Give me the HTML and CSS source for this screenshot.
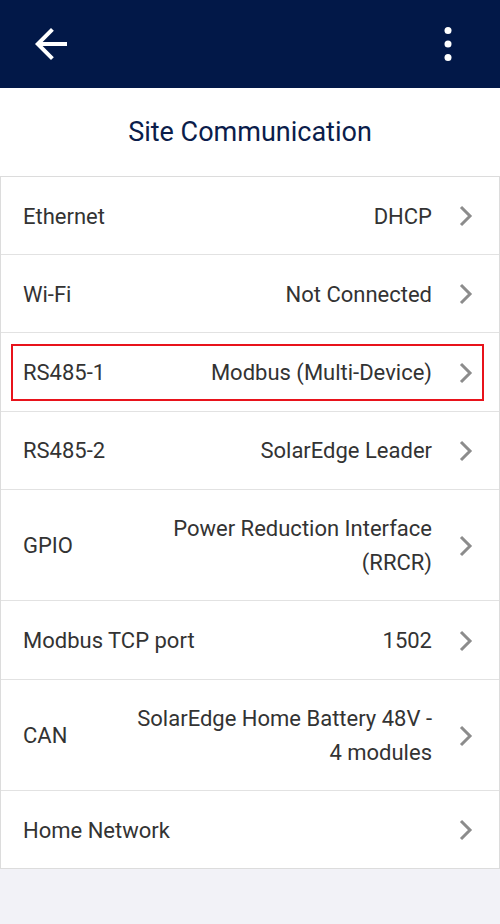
FILE: index.html
```html
<!DOCTYPE html>
<html>
<head>
<meta charset="utf-8">
<link rel="stylesheet" href="styles.css">
</head>
<body>
<header class="appbar">
  <svg class="back" viewBox="0 0 24 24" width="48" height="48"><path d="M20 11H7.83l5.59-5.59L12 4l-8 8 8 8 1.41-1.41L7.83 13H20v-2z" fill="#fff"/></svg>
  <svg class="kebab" viewBox="0 0 10 40" width="10" height="40"><circle cx="5" cy="6.5" r="3.5" fill="#fff"/><circle cx="5" cy="20" r="3.5" fill="#fff"/><circle cx="5" cy="33.5" r="3.5" fill="#fff"/></svg>
</header>
<div class="titlebar"><h1 class="title">Site Communication</h1></div>
<ul class="list">
  <li class="row"><span class="label">Ethernet</span><span class="value">DHCP</span><svg class="chev" viewBox="0 0 14 22" width="14" height="22"><polyline points="2,2 11,11 2,20" /></svg></li>
  <li class="row"><span class="label">Wi-Fi</span><span class="value">Not Connected</span><svg class="chev" viewBox="0 0 14 22" width="14" height="22"><polyline points="2,2 11,11 2,20" /></svg></li>
  <li class="row highlighted"><span class="label">RS485-1</span><span class="value">Modbus (Multi-Device)</span><svg class="chev" viewBox="0 0 14 22" width="14" height="22"><polyline points="2,2 11,11 2,20" /></svg></li>
  <li class="row"><span class="label">RS485-2</span><span class="value">SolarEdge Leader</span><svg class="chev" viewBox="0 0 14 22" width="14" height="22"><polyline points="2,2 11,11 2,20" /></svg></li>
  <li class="row"><span class="label">GPIO</span><span class="value">Power Reduction Interface<br>(RRCR)</span><svg class="chev" viewBox="0 0 14 22" width="14" height="22"><polyline points="2,2 11,11 2,20" /></svg></li>
  <li class="row"><span class="label">Modbus TCP port</span><span class="value">1502</span><svg class="chev" viewBox="0 0 14 22" width="14" height="22"><polyline points="2,2 11,11 2,20" /></svg></li>
  <li class="row"><span class="label">CAN</span><span class="value">SolarEdge Home Battery 48V -<br>4 modules</span><svg class="chev" viewBox="0 0 14 22" width="14" height="22"><polyline points="2,2 11,11 2,20" /></svg></li>
  <li class="row"><span class="label">Home Network</span><span class="value"></span><svg class="chev" viewBox="0 0 14 22" width="14" height="22"><polyline points="2,2 11,11 2,20" /></svg></li>
</ul>
</body>
</html>
```
FILE: styles.css
```css
* { box-sizing: border-box; }
html, body {
  margin: 0;
  padding: 0;
  background: #f2f2f7;
  font-family: Roboto, "Liberation Sans", sans-serif;
}
.appbar {
  height: 88px;
  background: #021848;
  display: flex;
  align-items: center;
  justify-content: space-between;
  padding: 0 47px 0 27px;
}
.back { display: block; }
.kebab { display: block; }
.titlebar {
  height: 88px;
  background: #fff;
  display: flex;
  align-items: center;
  justify-content: center;
}
.title {
  margin: 0;
  font-weight: 400;
  font-size: 27px;
  color: #0b1d4b;
}
.list {
  list-style: none;
  margin: 0;
  padding: 0;
  background: #fff;
  border: 1px solid #dcdcdc;
}
.row {
  position: relative;
  display: flex;
  align-items: center;
  padding: 22.6px 26px 21.2px 22px;
  border-top: 1px solid #e2e2e2;
  font-size: 22px;
  line-height: 33.4px;
  color: #333;
}
.row:first-child { border-top: none; }
.label { flex: 0 0 auto; }
.value {
  flex: 1 1 auto;
  text-align: right;
  margin-right: 27px;
}
.chev {
  flex: 0 0 auto;
  fill: none;
  stroke: #8c8c8c;
  stroke-width: 3;
}
.highlighted::after {
  content: "";
  position: absolute;
  left: 10px;
  right: 15px;
  top: 10.5px;
  bottom: 10px;
  border: 2px solid #e8131b;
}
```
